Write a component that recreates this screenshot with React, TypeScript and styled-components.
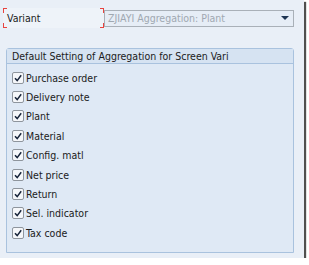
import React from 'react';
import styled, { createGlobalStyle } from 'styled-components';

const Global = createGlobalStyle`
  html, body {
    margin: 0;
    padding: 0;
    background: #ffffff;
  }
  body {
    font-family: Tahoma, "DejaVu Sans Condensed", "Liberation Sans", sans-serif;
    font-size: 10.5px;
    color: #1b1b1b;
  }
`;

const Screen = styled.div`
  width: 304px;
  height: 258px;
  background: #e9eff7;
  box-shadow: 2px 2px 1px #4f4f4f;
  box-sizing: border-box;
  padding: 8px 10px 0 3px;
  display: flex;
  flex-direction: column;
`;

const VariantRow = styled.div`
  display: flex;
  align-items: center;
  height: 20px;
`;

const LabelBox = styled.div`
  position: relative;
  width: 101px;
  height: 20px;
  box-sizing: border-box;
  padding-left: 4px;
  display: flex;
  align-items: center;
  background: #eef3f9;
`;

const Corner = styled.span<{ $x: 'left' | 'right'; $y: 'top' | 'bottom' }>`
  position: absolute;
  width: 3px;
  height: 4px;
  ${(p) => `${p.$x}: 0; ${p.$y}: 0;`}
  ${(p) => `border-${p.$x}: 1px solid #e8433f; border-${p.$y}: 1px solid #e8433f;`}
`;

const Dropdown = styled.div`
  flex: 1;
  height: 17px;
  box-sizing: border-box;
  border: 1px solid #a9b0b8;
  background: #e6edf6;
  display: flex;
  align-items: center;
  padding: 0 4px 0 3px;
  color: #a0a8b1;
`;

const DropText = styled.span`
  flex: 1;
  white-space: nowrap;
  overflow: hidden;
`;

const Arrow = styled.span`
  width: 0;
  height: 0;
  border-left: 4px solid transparent;
  border-right: 4px solid transparent;
  border-top: 4px solid #1e3553;
`;

const Group = styled.div`
  margin: 20px 0 0 3px;
  height: 205px;
  box-sizing: border-box;
  border: 1px solid #a9c2de;
  border-radius: 3px 3px 0 0;
  background: #dfe9f5;
  display: flex;
  flex-direction: column;
`;

const GroupHeader = styled.div`
  height: 14px;
  line-height: 14px;
  padding-left: 5px;
  background: #d6e3f2;
  border-bottom: 1px solid #a9c2de;
  white-space: nowrap;
  overflow: hidden;
`;

const List = styled.div`
  padding: 4px 0 0 5px;
  display: flex;
  flex-direction: column;
`;

const Row = styled.label`
  height: 19.4px;
  display: flex;
  align-items: center;
  gap: 2px;
`;

const Box = styled.span`
  width: 12px;
  height: 12px;
  box-sizing: border-box;
  border: 1px solid #8e959d;
  border-radius: 2px;
  background: #f5f7fa;
  display: flex;
  align-items: center;
  justify-content: center;
`;

const items = [
  'Purchase order',
  'Delivery note',
  'Plant',
  'Material',
  'Config. matl',
  'Net price',
  'Return',
  'Sel. indicator',
  'Tax code',
];

function Check() {
  return (
    <svg width="10" height="10" viewBox="0 0 10 10">
      <path d="M2 5.2 L4.2 7.6 L8.2 2.2" fill="none" stroke="#17243a" strokeWidth="1.5" />
    </svg>
  );
}

export default function App() {
  return (
    <>
      <Global />
      <Screen>
        <VariantRow>
          <LabelBox>
            <Corner $x="left" $y="top" />
            <Corner $x="left" $y="bottom" />
            <Corner $x="right" $y="top" />
            <Corner $x="right" $y="bottom" />
            Variant
          </LabelBox>
          <Dropdown>
            <DropText>ZJIAYI Aggregation: Plant</DropText>
            <Arrow />
          </Dropdown>
        </VariantRow>
        <Group>
          <GroupHeader>Default Setting of Aggregation for Screen Vari</GroupHeader>
          <List>
            {items.map((t) => (
              <Row key={t}>
                <Box>
                  <Check />
                </Box>
                {t}
              </Row>
            ))}
          </List>
        </Group>
      </Screen>
    </>
  );
}
